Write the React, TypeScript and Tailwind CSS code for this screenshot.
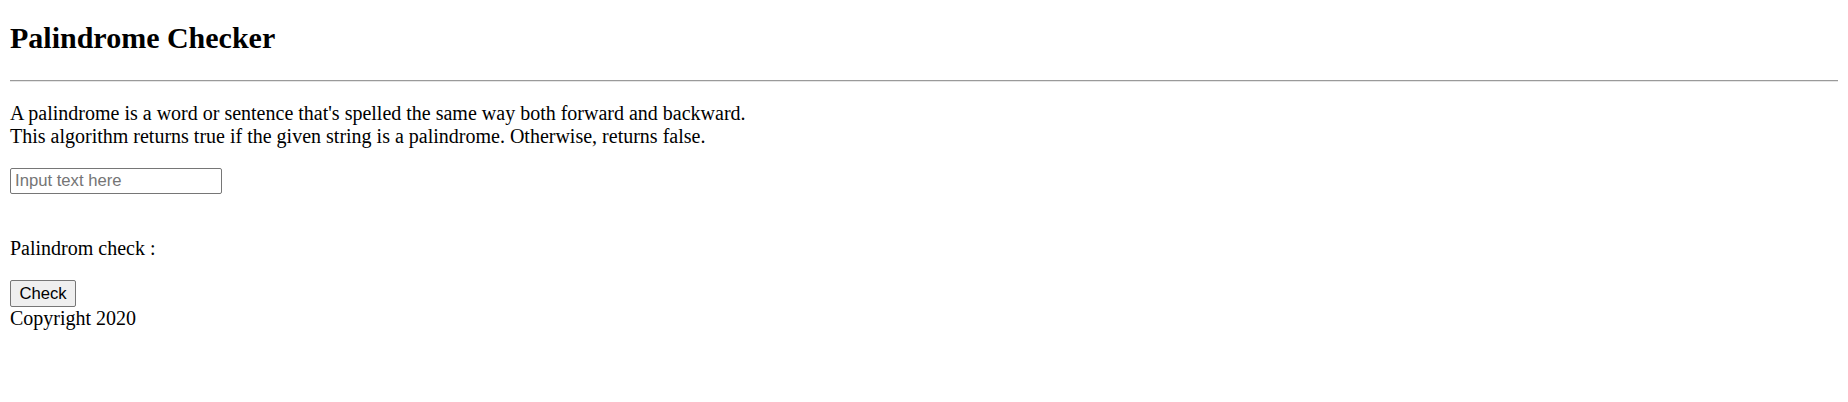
export default function App() {
  return (
    <div className="min-h-screen bg-white px-[10px] text-black font-['Liberation_Serif','Times_New_Roman',serif] text-[20px] leading-[23px]">
      <h2 className="pt-[21px] text-[30px] font-bold leading-[34px]">
        Palindrome Checker
      </h2>
      <div className="mt-[25px] border-t border-b border-t-[#9a9a9a] border-b-[#e6e6e6]" />
      <p className="mt-[20px]">
        A palindrome is a word or sentence that's spelled the same way both
        forward and backward.
        <br />
        This algorithm returns true if the given string is a palindrome.
        Otherwise, returns false.
      </p>
      <div className="mt-[20px] flex">
        <input
          type="text"
          placeholder="Input text here"
          className="h-[26px] w-[212px] rounded-[2px] border border-[#767676] px-[4px] font-['Liberation_Sans',Arial,sans-serif] text-[16.67px] text-black placeholder:text-[#757575] outline-none"
        />
      </div>
      <p className="mt-[43px]">Palindrom check :</p>
      <div className="mt-[20px] flex">
        <button className="h-[27px] w-[66px] rounded-[2px] border border-[#767676] bg-[#efefef] font-['Liberation_Sans',Arial,sans-serif] text-[16.67px] text-black">
          Check
        </button>
      </div>
      <footer>Copyright 2020</footer>
    </div>
  );
}
